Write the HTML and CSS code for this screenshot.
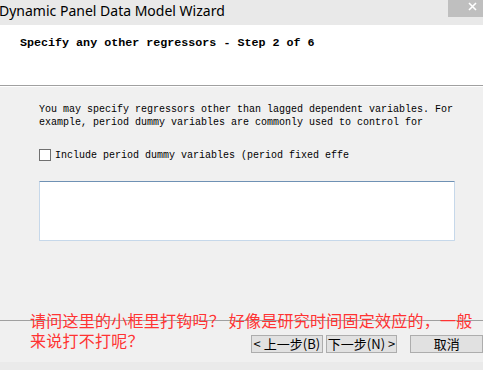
FILE: index.html
```html
<!DOCTYPE html>
<html>
<head>
<meta charset="utf-8">
<link rel="stylesheet" href="styles.css">
</head>
<body>
<div class="window">
  <div class="titlebar">
    <span class="title">Dynamic Panel Data Model Wizard</span>
    <div class="close">
      <svg width="9" height="9" viewBox="0 0 9 9"><path d="M1 1 L8 8 M8 1 L1 8" stroke="#fff" stroke-width="1.6"/></svg>
    </div>
  </div>
  <div class="header">
    <h1 class="step">Specify any other regressors - Step 2 of 6</h1>
  </div>
  <div class="content">
    <p class="desc">You may specify regressors other than lagged dependent variables. For<br>example, period dummy variables are commonly used to control for</p>
    <label class="check"><span class="box"></span><span class="check-label">Include period dummy variables (period fixed effe</span></label>
    <div class="textbox"></div>
  </div>
  <div class="footer">
    <div class="btn btn-back">&lt; 上一步(<u>B</u>)</div>
    <div class="btn btn-next">下一步(<u>N</u>) &gt;</div>
    <div class="btn btn-cancel">取消</div>
  </div>
  <div class="strip"></div>
  <div class="annotation">请问这里的小框里打钩吗？ 好像是研究时间固定效应的，一般<br>来说打不打呢？</div>
</div>
</body>
</html>
```
FILE: styles.css
```css
html, body {
  margin: 0;
  padding: 0;
  background: #f0f0f0;
}
.window {
  position: relative;
  width: 483px;
  height: 370px;
  overflow: hidden;
  background: #f0f0f0;
}
.titlebar {
  height: 25px;
  background: #e9e9e9;
  display: flex;
  align-items: flex-start;
  justify-content: space-between;
}
.title {
  font-family: "Noto Sans", "Open Sans", sans-serif;
  font-size: 14px;
  line-height: 21px;
  color: #000;
  margin-left: -1px;
  white-space: nowrap;
}
.close {
  width: 35px;
  height: 17px;
  background: #bfbfbf;
  display: flex;
  align-items: center;
  justify-content: center;
}
.close svg {
  margin-left: 14px;
  margin-top: -4px;
}
.header {
  height: 60px;
  background: #fff;
  border-bottom: 1px solid #a0a0a0;
  box-shadow: 0 1px 0 #fff;
}
.step {
  margin: 0;
  padding: 11px 0 0 20px;
  font-family: "Liberation Mono", monospace;
  font-weight: bold;
  font-size: 11.7px;
  line-height: 14px;
  color: #000;
  white-space: nowrap;
}
.content {
  padding: 17px 0 0 39px;
}
.desc {
  margin: 0;
  font-family: "Liberation Mono", monospace;
  font-size: 10px;
  line-height: 13px;
  color: #000;
  white-space: nowrap;
}
.check {
  display: flex;
  align-items: center;
  margin-top: 20px;
  height: 12px;
  font-family: "Liberation Mono", monospace;
  font-size: 10px;
  color: #000;
  white-space: nowrap;
}
.box {
  width: 10px;
  height: 10px;
  border: 1px solid #707070;
  background: #fff;
  margin-right: 4px;
  flex: none;
}
.check-label {
  padding-top: 1px;
}
.textbox {
  margin-top: 20px;
  width: 414px;
  height: 58px;
  background: #fff;
  border: 1px solid #c6d8ea;
  border-top-color: #6f91b4;
  border-radius: 1px;
}
.footer {
  margin-top: 79px;
  border-top: 1px solid #a0a0a0;
  height: 41px;
  box-sizing: border-box;
  padding: 14px 0 0 251px;
  display: flex;
  align-items: flex-start;
}
.btn {
  height: 18px;
  box-sizing: border-box;
  border: 1px solid #adadad;
  background: #e1e1e1;
  font-family: "Noto Sans CJK SC", sans-serif;
  font-size: 13px;
  line-height: 16px;
  color: #000;
  text-align: center;
  white-space: nowrap;
}
.btn u {
  text-decoration: none;
}
.btn-back {
  width: 72px;
}
.btn-next {
  width: 72px;
  margin-left: 3px;
}
.btn-cancel {
  width: 73px;
  margin-left: 13px;
}
.strip {
  height: 8px;
  margin-top: 1px;
  background: #eaeaea;
}
.annotation {
  position: absolute;
  left: 30px;
  top: 310px;
  font-family: "Noto Sans CJK SC", sans-serif;
  font-size: 16px;
  line-height: 20px;
  letter-spacing: 0.25px;
  color: #ff3333;
  white-space: nowrap;
}
```
